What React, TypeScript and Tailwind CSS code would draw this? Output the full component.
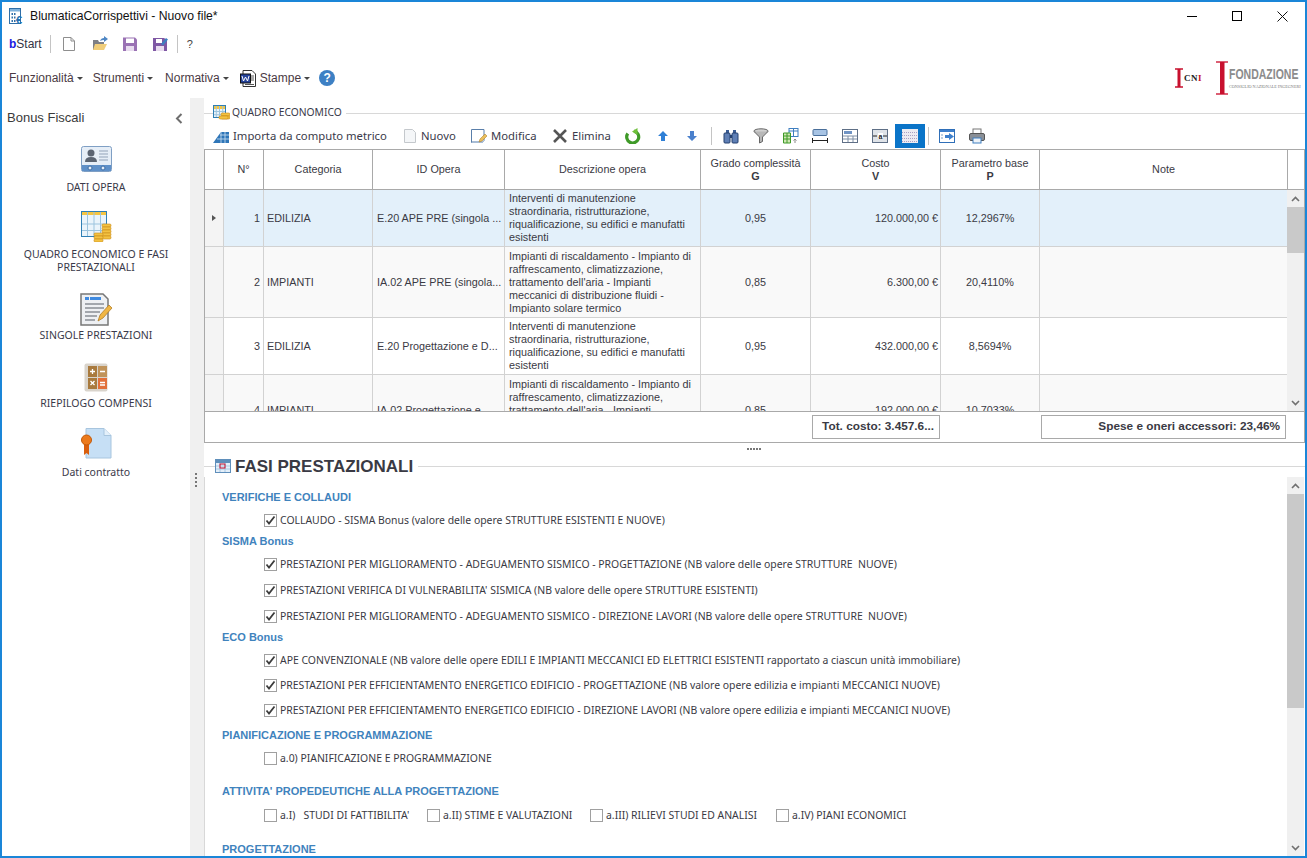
import React from "react";

const font = { fontFamily: '"Liberation Sans", Tahoma, sans-serif' };

const Table = ({ x = 0, y = 0, w = 16, h = 14, head = "#f5c542" }: any) => (
  <g>
    <rect x={x + 0.5} y={y + 0.5} width={w - 1} height={h - 1} fill="#eaf4fb" stroke="#2f7fb5" />
    <rect x={x + 1} y={y + 1} width={w - 2} height={3} fill={head} />
    {[1, 2, 3].map((i) => (
      <line key={i} x1={x + (i * w) / 4} x2={x + (i * w) / 4} y1={y + 1} y2={y + h - 1} stroke="#9cc4de" />
    ))}
    {[2, 3].map((i) => (
      <line key={i} x1={x + 1} x2={x + w - 1} y1={y + (i * h) / 4} y2={y + (i * h) / 4} stroke="#9cc4de" />
    ))}
  </g>
);

const Coins = ({ x, y, n = 2 }: any) => (
  <g>
    {Array.from({ length: n }).map((_, i) => (
      <g key={i}>
        <rect x={x} y={y + i * 3} width={9} height={3} rx={1.2} fill="#f3c242" stroke="#c98a18" strokeWidth={0.6} />
      </g>
    ))}
  </g>
);

const Small = ({ children, w = 16, h = 16 }: any) => (
  <svg width={w} height={h} viewBox={`0 0 ${w} ${h}`} className="shrink-0">
    {children}
  </svg>
);

const Check = ({ on }: { on: boolean }) => (
  <span className="w-[13px] h-[13px] border border-[#a0a0a0] bg-white flex items-center justify-center shrink-0">
    {on && (
      <svg width="11" height="11" viewBox="0 0 11 11">
        <path d="M1.5 5.5 L4 8.5 L9.5 1.5" fill="none" stroke="#3c3c3c" strokeWidth="1.8" />
      </svg>
    )}
  </span>
);

const Caret = () => <span className="ml-[3px] w-0 h-0 border-x-[3px] border-x-transparent border-t-[3px] border-t-[#444]" />;

const Menu = ({ label, className = "" }: { label: string; className?: string }) => (
  <span className={`flex items-center text-[12px] text-[#4a3a44] ${className}`}>
    {label}
    <Caret />
  </span>
);

const SideItem = ({ icon, lines, mt, labelMt }: { icon: React.ReactNode; lines: string[]; mt: string; labelMt: string }) => (
  <div className={`flex flex-col items-center ${mt}`}>
    {icon}
    <div className={`font-['Noto_Sans'] text-[10.5px] leading-[13px] text-[#3a3a4a] text-center ${labelMt}`}>
      {lines.map((l) => (
        <div key={l}>{l}</div>
      ))}
    </div>
  </div>
);

const TbBtn = ({ icon, label, w, className = "" }: { icon: React.ReactNode; label: string; w: string; className?: string }) => (
  <div className={`flex items-center gap-[4px] ${className}`}>
    {icon}
    <span className={`font-['Noto_Sans'] text-[11.3px] text-[#3a3a4a] whitespace-nowrap ${w}`}>{label}</span>
  </div>
);

const cols = "grid grid-cols-[19px_40px_109px_132px_196px_110px_130px_99px_248px]";

const edil = ["Interventi di manutenzione", "straordinaria, ristrutturazione,", "riqualificazione, su edifici e manufatti", "esistenti"];
const imp = [
  "Impianti di riscaldamento - Impianto di",
  "raffrescamento, climatizzazione,",
  "trattamento dell'aria - Impianti",
  "meccanici di distribuzione fluidi -",
  "Impianto solare termico",
];

const rows = [
  { n: 1, cat: "EDILIZIA", id: "E.20 APE PRE (singola ...", d: edil, g: "0,95", v: "120.000,00 €", p: "12,2967%", bg: "bg-[#e3f0fa]", h: "h-[57px]" },
  { n: 2, cat: "IMPIANTI", id: "IA.02 APE PRE (singola...", d: imp, g: "0,85", v: "6.300,00 €", p: "20,4110%", bg: "bg-[#f9f9f9]", h: "h-[71px]" },
  { n: 3, cat: "EDILIZIA", id: "E.20 Progettazione e D...", d: edil, g: "0,95", v: "432.000,00 €", p: "8,5694%", bg: "bg-white", h: "h-[57px]" },
  { n: 4, cat: "IMPIANTI", id: "IA.02 Progettazione e ...", d: imp, g: "0,85", v: "192.000,00 €", p: "10,7033%", bg: "bg-[#f9f9f9]", h: "h-[71px]" },
];

const Cell = ({ children, className = "" }: { children?: React.ReactNode; className?: string }) => (
  <div className={`border-r border-b border-[#d2d2d2] flex items-center min-w-0 whitespace-nowrap overflow-hidden ${className}`}>{children}</div>
);

const Head = ({ children, className = "" }: { children?: React.ReactNode; className?: string }) => (
  <div className={`border-r border-[#a9a9a9] flex flex-col items-center justify-center leading-[13px] text-center ${className}`}>{children}</div>
);

const Arrow = ({ up }: { up?: boolean }) => (
  <svg width="9" height="6" viewBox="0 0 9 6">
    <path d={up ? "M1 5 L4.5 1.5 L8 5" : "M1 1 L4.5 4.5 L8 1"} fill="none" stroke="#707070" strokeWidth="1.6" />
  </svg>
);

const Scroll = ({ trackH, thumbTop, thumbH, className = "" }: { trackH: string; thumbTop: string; thumbH: string; className?: string }) => (
  <div className={`w-[17px] bg-[#f0f0f0] flex flex-col items-center justify-between shrink-0 relative ${trackH} ${className}`}>
    <div className="h-[17px] flex items-center"><Arrow up /></div>
    <div className={`absolute left-0 w-[17px] bg-[#c9c9c9] ${thumbTop} ${thumbH}`} />
    <div className="h-[17px] flex items-center"><Arrow /></div>
  </div>
);

const Section = ({ label, className = "" }: { label: string; className?: string }) => (
  <div className={`text-[11px] leading-[14px] font-bold text-[#3f83bd] ${className}`}>{label}</div>
);

const Opt = ({ label, on = false, mt, pl = "pl-[42px]" }: { label: string; on?: boolean; mt: string; pl?: string }) => (
  <div className={`flex items-center gap-[3px] h-[14px] ${pl} ${mt}`}>
    <Check on={on} />
    <span className="font-['Noto_Sans'] text-[10.43px] leading-[14px] text-[#3a3a44] whitespace-pre">{label}</span>
  </div>
);

export default function App() {
  return (
    <div style={font} className="w-[1307px] h-[858px] overflow-hidden bg-white border-t-2 border-l-2 border-r-[2px] border-b-[2px] border-[#1a86d8] flex flex-col">
      {/* Title bar */}
      <div className="h-[28px] flex items-center shrink-0 pl-[7px]">
        <Small w={16} h={17}>
          <rect x="0.5" y="0.5" width="11" height="15" fill="#fff" stroke="#2f6fa8" />
          <rect x="1" y="1" width="10" height="2.5" fill="#7fb2dc" />
          <path d="M2.500 5h1.500v2h-1.500zM5 5h1.500v2H5zM2.500 8.500h1.500v2h-1.500zM5 8.500h1.500v2H5zM2.500 12h1.500v2h-1.500zM5 12h1.500v2H5z" fill="#2f6fa8" />
          <text x="7" y="16" fontSize="11" fontWeight="700" fill="#1f6fb0">€</text>
        </Small>
        <span className="ml-[5px] text-[12.2px] text-[#111]">BlumaticaCorrispettivi - Nuovo file*</span>
        <div className="ml-auto flex items-center">
          <div className="w-[10px] h-px bg-black mr-[35px]" />
          <div className="w-[10px] h-[10px] border border-black mr-[35px]" />
          <svg width="11" height="11" viewBox="0 0 11 11" className="mr-[17px]">
            <path d="M0.5 0.5 L10.5 10.5 M10.5 0.5 L0.5 10.5" stroke="#111" strokeWidth="1" />
          </svg>
        </div>
      </div>

      {/* Quick toolbar */}
      <div className="h-[28px] flex items-center shrink-0 pl-[7px]">
        <span className="text-[12px] text-[#333344]"><b className="text-[#1a1ae0]">b</b>Start</span>
        <div className="w-px h-[18px] bg-[#c4c4c4] ml-[8px]" />
        <div className="ml-[11px]">
          <Small w={14} h={16}>
            <path d="M1.5 1.5h7.5l3.5 3.5v9.5h-11z M9 1.5v3.5h3.5" fill="#fff" stroke="#8e8e8e" />
          </Small>
        </div>
        <div className="ml-[16px]">
          <Small>
            <path d="M1 4h5l1 2h5v8H1z" fill="#7d7f85" />
            <path d="M3 8h12l-3 6H1z" fill="#f0cd7a" />
            <path d="M8 5q1-3 4-3V0l4 3-4 3V4q-2 0-4 1z" fill="#4f87c4" />
          </Small>
        </div>
        <div className="ml-[14px]">
          <Small>
            <path d="M1 1.5h12l2 2V15H1z" fill="#9a72b4" />
            <rect x="4" y="2.5" width="8" height="4.5" fill="#fff" />
            <rect x="4" y="10" width="8" height="5" fill="#e8dcef" />
          </Small>
        </div>
        <div className="ml-[14px]">
          <Small>
            <path d="M1 2h11l3 2v11H1z" fill="#7f58a4" />
            <rect x="4" y="3" width="6" height="4" fill="#fff" />
            <rect x="4" y="10" width="8" height="5" fill="#e8dcef" />
            <path d="M9 8l5-6 2 1.500-5 6z" fill="#3f7fc0" />
          </Small>
        </div>
        <div className="w-px h-[18px] bg-[#c4c4c4] ml-[9px]" />
        <span className="ml-[9px] text-[11px] text-[#444]">?</span>
      </div>

      {/* Menu row */}
      <div className="h-[40px] flex items-center shrink-0 pl-[7px] relative">
        <Menu label="Funzionalità" />
        <Menu label="Strumenti" className="ml-[10px]" />
        <Menu label="Normativa" className="ml-[12px]" />
        <div className="ml-[11px]">
          <Small h={17}>
            <path d="M3 0.500h9l3.500 3.500v12.500h-12.500z" fill="#fff" stroke="#333" />
            <rect x="0.500" y="4" width="10" height="9" fill="#24429a" stroke="#111" />
            <path d="M2 6l1.500 5 2-4 2 4 1.500-5" fill="none" stroke="#fff" />
            <path d="M11 6h3M11 8h3M11 10h3M5 14.500h9" stroke="#555" />
          </Small>
        </div>
        <Menu label="Stampe" className="ml-[4px]" />
        <span className="ml-[9px] w-[16px] h-[16px] rounded-full bg-[#3d80c4] text-white text-[12px] font-bold flex items-center justify-center">?</span>

        {/* Logos */}
        <div className="ml-auto mr-[4px] flex items-center">
          <svg width="12" height="20" viewBox="0 0 12 20" className="shrink-0">
            <path d="M1 1h8M1 19h8" stroke="#c8102e" strokeWidth="1.500" />
            <rect x="3.500" y="1" width="3" height="18" fill="#c8102e" />
          </svg>
          <span style={{ fontFamily: '"Liberation Serif", serif' }} className="text-[9px] font-bold text-[#222] leading-none tracking-[0.5px] -ml-[2px] mr-[14px]">
            CN<span className="text-[#c8102e]">I</span>
          </span>
          <svg width="13" height="34" viewBox="0 0 13 34" className="shrink-0">
            <path d="M0 1h12M0 33h12" stroke="#d12a45" strokeWidth="1.500" />
            <rect x="4" y="1" width="4.500" height="32" fill="#c8102e" />
          </svg>
          <div className="flex flex-col w-[72px]">
            <span className="text-[#8c8c8c] font-bold text-[15px] leading-[16px] scale-x-[0.7] origin-left whitespace-nowrap">FONDAZIONE</span>
            <span style={{ fontFamily: '"Liberation Serif", serif' }} className="text-[#777] text-[4.2px] leading-[6px] mt-[2px] whitespace-nowrap">CONSIGLIO NAZIONALE INGEGNERI</span>
          </div>
        </div>
      </div>

      {/* Body */}
      <div className="flex-1 flex min-h-0">
        {/* Sidebar */}
        <div className="w-[188px] shrink-0 flex flex-col">
          <div className="flex items-center justify-between pl-[5px] pr-[7px] mt-[9px] h-[22px]">
            <span className="text-[13px] text-[#3a3a3a]">Bonus Fiscali</span>
            <svg width="8" height="11" viewBox="0 0 8 11"><path d="M6.500 1 L2 5.500 L6.500 10" fill="none" stroke="#6e6e6e" strokeWidth="2" /></svg>
          </div>
          <SideItem
            mt="mt-[17px]"
            labelMt="mt-[9px]"
            lines={["DATI OPERA"]}
            icon={
              <svg width="31" height="26" viewBox="0 0 31 26">
                <rect x="0.500" y="0.500" width="30" height="25" rx="2" fill="#e6eef7" stroke="#7f9fc4" />
                <rect x="1" y="19" width="29" height="6" fill="#5f90c8" />
                <circle cx="10" cy="7" r="3.500" fill="#5b6472" />
                <path d="M4 16q0-5 6-5t6 5z" fill="#5b6472" />
                <path d="M18 5h9M18 8h9M18 11h9M18 14h9" stroke="#93a3b8" />
                <circle cx="9" cy="22" r="2" fill="#e6eef7" stroke="#3f6ea5" />
                <circle cx="22" cy="22" r="2" fill="#e6eef7" stroke="#3f6ea5" />
              </svg>
            }
          />
          <SideItem
            mt="mt-[17px]"
            labelMt="mt-[6px]"
            lines={["QUADRO ECONOMICO E FASI", "PRESTAZIONALI"]}
            icon={
              <svg width="31" height="31" viewBox="0 0 31 31">
                <Table x={0} y={0} w={26} h={26} />
                <Coins x={21} y={13} n={5} />
                <Coins x={13} y={22} n={3} />
              </svg>
            }
          />
          <SideItem
            mt="mt-[19px]"
            labelMt="mt-[3px]"
            lines={["SINGOLE PRESTAZIONI"]}
            icon={
              <svg width="33" height="33" viewBox="0 0 33 33">
                <path d="M1 1h22l5 5v26H1z" fill="#eef0f3" stroke="#777" strokeWidth="1.500" />
                <rect x="5" y="4" width="4" height="3" fill="#3f8ae0" />
                <rect x="10" y="4" width="11" height="3" fill="#3f8ae0" />
                <path d="M5 11h19M5 15h19M5 19h15M5 23h12M5 27h10" stroke="#8b8f96" strokeWidth="1.500" />
                <path d="M18 28l2-6 9-10 3 3-9 10z" fill="#f0b644" stroke="#a9741c" strokeWidth="0.700" />
              </svg>
            }
          />
          <SideItem
            mt="mt-[21px]"
            labelMt="mt-[4px]"
            lines={["RIEPILOGO COMPENSI"]}
            icon={
              <svg width="24" height="30" viewBox="0 0 24 30">
                <rect x="0.500" y="0.500" width="23" height="28" rx="2" fill="#d9d4cc" />
                <rect x="4" y="3" width="9" height="11" fill="#a97a3e" />
                <rect x="14" y="3" width="9" height="11" fill="#c0935a" />
                <rect x="4" y="15" width="9" height="11" fill="#a97a3e" />
                <rect x="14" y="15" width="9" height="11" fill="#e2703a" />
                <path d="M6 8.500h5M8.500 6v5M16 8.500h5M6.500 18l4 4M10.500 18l-4 4M16 19.500h5M16 22h5" stroke="#fff" strokeWidth="1.300" />
              </svg>
            }
          />
          <SideItem
            mt="mt-[18px]"
            labelMt="mt-[7px]"
            lines={["Dati contratto"]}
            icon={
              <svg width="31" height="31" viewBox="0 0 31 31">
                <path d="M5 0.500h18l7 7V30H5z" fill="#c6dff5" stroke="#a8c5de" />
                <path d="M23 0.500v7h7" fill="#e4f0fa" stroke="#a8c5de" />
                <path d="M3 14h5v13l-2.500-2-2.500 2z" fill="#d95f0e" />
                <circle cx="5.500" cy="12" r="5" fill="#ec7a1c" stroke="#c25a0a" />
              </svg>
            }
          />
        </div>

        {/* Splitter */}
        <div className="w-[14px] shrink-0 bg-[#f0f0f0] flex flex-col items-center relative">
          <div className="absolute top-[375px] left-[5px] flex flex-col gap-[2px]">
            {[0, 1, 2, 3].map((i) => (
              <div key={i} className="w-[2px] h-[2px] bg-[#777]" />
            ))}
          </div>
        </div>

        {/* Main */}
        <div className="flex-1 min-w-0 flex flex-col">
          {/* Quadro group header */}
          <div className="h-[20px] flex items-center mt-[5px] shrink-0">
            <div className="w-[9px] h-px bg-[#d8d8d8]" />
            <Small w={17} h={16}>
              <Table x={0} y={0} w={13} h={13} />
              <Coins x={8} y={8} n={2} />
              <Coins x={6} y={11} n={1} />
            </Small>
            <span className="font-['Noto_Sans'] ml-[2px] mr-[4px] text-[10.3px] text-[#3a3a4a]">QUADRO ECONOMICO</span>
            <div className="flex-1 h-px bg-[#d8d8d8]" />
          </div>

          {/* Table toolbar */}
          <div className="h-[24px] flex items-center shrink-0 pl-[9px] mt-[1px]">
            <TbBtn
              w="w-[154px]"
              label="Importa da computo metrico"
              icon={
                <Small>
                  <path d="M0 15L8 4h8v11z" fill="#2f76b8" />
                  <path d="M8 4v11M12 4v11M4 11h12M7 7h9" stroke="#cfe3f4" strokeWidth="0.800" />
                </Small>
              }
            />
            <TbBtn
              className="ml-[16px]"
              w="w-[36px]"
              label="Nuovo"
              icon={
                <Small w={14}>
                  <path d="M1.500 1.500h8l3 3v10h-11z" fill="#f4f6f8" stroke="#c4c8cc" />
                </Small>
              }
            />
            <TbBtn
              className="ml-[14px]"
              w="w-[47px]"
              label="Modifica"
              icon={
                <Small>
                  <path d="M0.500 1.500h12.500v11l-2 2H0.500z" fill="#fff" stroke="#5a7faa" />
                  <path d="M1 13h11v2H1z" fill="#a8bcd4" />
                  <path d="M8 14l1-3 5-5 2 2-5 5z" fill="#eabf5c" stroke="#a9741c" strokeWidth="0.500" />
                </Small>
              }
            />
            <TbBtn
              className="ml-[14px]"
              w="w-[39px]"
              label="Elimina"
              icon={
                <Small>
                  <path d="M2 2l12 12M14 2L2 14" stroke="#555" strokeWidth="2.600" />
                </Small>
              }
            />
            <div className="ml-[14px]">
              <Small>
                <path d="M2.800 5.500a6 6 0 1 0 6.200-2.400" fill="none" stroke="#3f9a28" strokeWidth="3.200" />
                <path d="M12.500 0v7L7 3.500z" fill="#6fbf3a" />
              </Small>
            </div>
            <div className="ml-[17px]">
              <Small w={10} h={12}>
                <path d="M5 1L10 6H7v5H3V6H0z" fill="#2f7fd6" />
              </Small>
            </div>
            <div className="ml-[19px]">
              <Small w={10} h={12}>
                <path d="M5 11L0 6h3V1h4v5h3z" fill="#4a80cc" />
              </Small>
            </div>
            <div className="w-px h-[18px] bg-[#c4c4c4] ml-[14px]" />
            <div className="ml-[11px]">
              <Small>
                <path d="M3 2h3v3h-3zM10 2h3v3h-3z" fill="#3a5c94" />
                <rect x="1" y="5" width="6" height="10" rx="1" fill="#5f7fb5" stroke="#24406f" />
                <rect x="9" y="5" width="6" height="10" rx="1" fill="#5f7fb5" stroke="#24406f" />
                <rect x="7" y="7" width="2" height="3" fill="#24406f" />
              </Small>
            </div>
            <div className="ml-[14px]">
              <Small>
                <ellipse cx="8" cy="3" rx="7" ry="2.200" fill="#d0d0d0" stroke="#666" />
                <path d="M1 3.500L6.500 9v6l3-1.500V9L15 3.500" fill="#b8b8b8" stroke="#666" />
              </Small>
            </div>
            <div className="ml-[14px]">
              <Small>
                <rect x="6" y="0.500" width="9" height="8" fill="#fff" stroke="#3f7fc0" />
                <path d="M6 3h9M10.500 0.500v8" stroke="#3f7fc0" />
                <path d="M0.500 5h7v10h-7z" fill="#cfe8b4" stroke="#3f9a28" />
                <path d="M0.500 8h7M0.500 11h7M4 5v10" stroke="#3f9a28" />
                <path d="M12 11v4M10.500 12.500L12 11l1.500 1.500" fill="none" stroke="#888" />
              </Small>
            </div>
            <div className="ml-[13px]">
              <Small>
                <rect x="1" y="1.500" width="14" height="6" rx="1" fill="#a8c4e4" stroke="#4a6f9a" />
                <path d="M0.500 10v5M15.500 10v5M1 12.500h14" stroke="#222" />
              </Small>
            </div>
            <div className="ml-[14px]">
              <Small>
                <rect x="0.500" y="1.500" width="15" height="13" fill="#fff" stroke="#5f6f86" />
                <rect x="2" y="3" width="8" height="3" fill="#6f93c4" />
                <path d="M1 8h14M1 11h14M6 8v6M11 8v6" stroke="#7f8fa6" />
              </Small>
            </div>
            <div className="ml-[14px]">
              <Small>
                <rect x="0.500" y="1.500" width="15" height="13" fill="#dfe3e8" stroke="#5f6f86" />
                <rect x="6" y="5" width="5" height="6" fill="#fff" />
                <text x="6.500" y="10.500" fontSize="7" fontWeight="700" fill="#222">a</text>
                <path d="M1 8h4M11 8h4" stroke="#222" />
              </Small>
            </div>
            <div className="ml-[7px] w-[30px] h-[24px] bg-[#0a74c8] flex items-center justify-center">
              <Small>
                <rect x="0" y="1" width="16" height="14" fill="#ecebf2" />
                <path d="M0 4.500h16M0 7.500h16M0 10.500h16M0 13.500h16" stroke="#a8a0c4" strokeDasharray="1 1" />
              </Small>
            </div>
            <div className="w-px h-[18px] bg-[#c4c4c4] ml-[3px]" />
            <div className="ml-[10px]">
              <Small>
                <rect x="0.500" y="1.500" width="15" height="13" fill="#fff" stroke="#2f6fb8" />
                <rect x="1" y="2" width="14" height="2" fill="#3f80cc" />
                <path d="M6 7h4V5l5 3.500-5 3.500v-2H6z" fill="#3f80cc" />
                <path d="M2 7h2M2 10h2" stroke="#7f9fc4" />
              </Small>
            </div>
            <div className="ml-[14px]">
              <Small>
                <rect x="4" y="1" width="8" height="5" fill="#fff" stroke="#777" />
                <rect x="0.500" y="5.500" width="15" height="7" rx="1.500" fill="#8a8f96" stroke="#555" />
                <rect x="4" y="10" width="8" height="5" fill="#eef3f8" stroke="#3f7fc0" />
              </Small>
            </div>
          </div>

          {/* Table */}
          <div className="h-[294px] shrink-0 border border-[#a9a9a9] flex flex-col text-[10.8px] text-[#3a3a44] mt-[1px]">
            <div className="h-[40px] shrink-0 flex border-b border-[#a9a9a9]">
              <div className={`${cols} flex-1`}>
                <Head />
                <Head>N°</Head>
                <Head>Categoria</Head>
                <Head>ID Opera</Head>
                <Head>Descrizione opera</Head>
                <Head>
                  <span>Grado complessità</span>
                  <b>G</b>
                </Head>
                <Head>
                  <span>Costo</span>
                  <b>V</b>
                </Head>
                <Head>
                  <span>Parametro base</span>
                  <b>P</b>
                </Head>
                <Head>Note</Head>
              </div>
              <div className="w-[17px] shrink-0" />
            </div>
            <div className="h-[222px] shrink-0 flex border-b border-[#a9a9a9]">
              <div className="flex-1 min-w-0 h-[221px] overflow-hidden">
                {rows.map((r, i) => (
                  <div key={r.n} className={`${cols} ${r.bg} ${r.h}`}>
                    <Cell className="bg-[#f4f4f4] justify-center">
                      {i === 0 && <span className="w-0 h-0 border-y-[3px] border-y-transparent border-l-[4px] border-l-[#555]" />}
                    </Cell>
                    <Cell className="justify-end pr-[3px]">{r.n}</Cell>
                    <Cell className="pl-[3px]">{r.cat}</Cell>
                    <Cell className="pl-[4px]">{r.id}</Cell>
                    <Cell className="pl-[4px]">
                      <div className="leading-[13px]">
                        {r.d.map((l) => (
                          <div key={l}>{l}</div>
                        ))}
                      </div>
                    </Cell>
                    <Cell className="justify-center">{r.g}</Cell>
                    <Cell className="justify-end pr-[2px]">{r.v}</Cell>
                    <Cell className="justify-center">{r.p}</Cell>
                    <Cell />
                  </div>
                ))}
              </div>
              <Scroll trackH="h-[221px]" thumbTop="top-[17px]" thumbH="h-[46px]" />
            </div>
            <div className="flex-1 flex items-center justify-end font-bold text-[11.8px]">
              <div className="w-[128px] h-[24px] border border-[#a9a9a9] flex items-center justify-end pr-[5px]">Tot. costo: 3.457.6...</div>
              <div className="ml-[101px] mr-[18px] w-[245px] h-[24px] border border-[#a9a9a9] flex items-center justify-end pr-[5px]">Spese e oneri accessori: 23,46%</div>
            </div>
          </div>

          {/* Horizontal splitter */}
          <div className="h-[12px] shrink-0 flex items-center justify-center pr-[2px]">
            <div className="flex gap-[1px]">
              {[0, 1, 2, 3, 4].map((i) => (
                <div key={i} className="w-[2px] h-[2px] bg-[#777]" />
              ))}
            </div>
          </div>

          {/* Fasi group */}
          <div className="h-[22px] shrink-0 flex items-center">
            <div className="w-[11px] h-px bg-[#d8d8d8]" />
            <Small w={17} h={16}>
              <rect x="0.500" y="1.500" width="15" height="13" fill="#e4eff9" stroke="#5f8fbb" />
              <rect x="1" y="2" width="14" height="3" fill="#5f8fbb" />
              <path d="M1 8h14M1 11h14M5 5v9M10 5v9" stroke="#a8c8e4" />
              <rect x="5" y="6" width="5" height="4" fill="none" stroke="#c8102e" />
            </Small>
            <span className="ml-[3px] mr-[5px] text-[17px] leading-none font-bold text-[#3a3a44]">FASI PRESTAZIONALI</span>
            <div className="flex-1 h-px bg-[#d8d8d8]" />
          </div>
          <div className="flex-1 min-h-0 flex border-l border-[#d8d8d8] overflow-hidden">
            <div className="flex-1 min-w-0 pl-[17px] pt-[13px] overflow-hidden">
              <Section label="VERIFICHE E COLLAUDI" />
              <Opt mt="mt-[9px]" on label="COLLAUDO - SISMA Bonus (valore delle opere STRUTTURE ESISTENTI E NUOVE)" />
              <Section className="mt-[7px]" label="SISMA Bonus" />
              <Opt mt="mt-[9px]" on label="PRESTAZIONI PER MIGLIORAMENTO - ADEGUAMENTO SISMICO - PROGETTAZIONE (NB valore delle opere STRUTTURE  NUOVE)" />
              <Opt mt="mt-[12px]" on label="PRESTAZIONI VERIFICA DI VULNERABILITA' SISMICA (NB valore delle opere STRUTTURE ESISTENTI)" />
              <Opt mt="mt-[12px]" on label="PRESTAZIONI PER MIGLIORAMENTO - ADEGUAMENTO SISMICO - DIREZIONE LAVORI (NB valore delle opere STRUTTURE  NUOVE)" />
              <Section className="mt-[7px]" label="ECO Bonus" />
              <Opt mt="mt-[9px]" on label="APE CONVENZIONALE (NB valore delle opere EDILI E IMPIANTI MECCANICI ED ELETTRICI ESISTENTI rapportato a ciascun unità immobiliare)" />
              <Opt mt="mt-[11px]" on label="PRESTAZIONI PER EFFICIENTAMENTO ENERGETICO EDIFICIO - PROGETTAZIONE (NB valore opere edilizia e impianti MECCANICI NUOVE)" />
              <Opt mt="mt-[11px]" on label="PRESTAZIONI PER EFFICIENTAMENTO ENERGETICO EDIFICIO - DIREZIONE LAVORI (NB valore opere edilizia e impianti MECCANICI NUOVE)" />
              <Section className="mt-[11px]" label="PIANIFICAZIONE E PROGRAMMAZIONE" />
              <Opt mt="mt-[9px]" label="a.0) PIANIFICAZIONE E PROGRAMMAZIONE" />
              <Section className="mt-[19px]" label="ATTIVITA' PROPEDEUTICHE ALLA PROGETTAZIONE" />
              <div className="grid grid-cols-[205px_163px_186px_auto] mt-[10px]">
                <Opt mt="" label="a.I)   STUDI DI FATTIBILITA'" />
                <Opt mt="" pl="pl-0" label="a.II) STIME E VALUTAZIONI" />
                <Opt mt="" pl="pl-0" label="a.III) RILIEVI STUDI ED ANALISI" />
                <Opt mt="" pl="pl-0" label="a.IV) PIANI ECONOMICI" />
              </div>
              <Section className="mt-[20px]" label="PROGETTAZIONE" />
            </div>
            <Scroll trackH="h-full" thumbTop="top-[17px]" thumbH="h-[214px]" className="mr-[1px]" />
          </div>
        </div>
      </div>
    </div>
  );
}
